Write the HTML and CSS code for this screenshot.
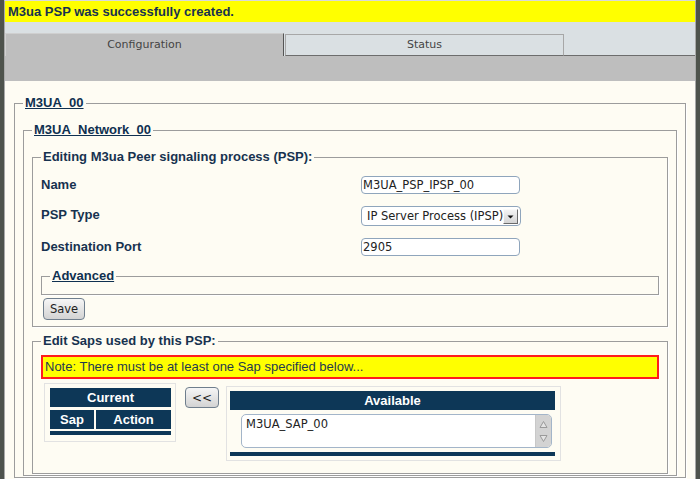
FILE: index.html
```html
<!DOCTYPE html>
<html>
<head>
<meta charset="utf-8">
<link rel="stylesheet" href="styles.css">
</head>
<body>
<div class="frame">
  <div class="banner">M3ua PSP was successfully created.</div>
  <div class="tabbar">
    <div class="tab active">Configuration</div>
    <div class="tab">Status</div>
    <div class="tabfill"></div>
  </div>
  <div class="band"></div>
  <div class="content">
    <fieldset class="fs">
      <legend class="lg"><a href="#">M3UA_00</a></legend>
      <fieldset class="fs">
        <legend class="lg"><a href="#">M3UA_Network_00</a></legend>
        <fieldset class="fs edit">
          <legend class="lg">Editing M3ua Peer signaling process (PSP):</legend>
          <div class="form">
            <label class="lbl">Name</label>
            <input class="inp" type="text" value="M3UA_PSP_IPSP_00">
            <label class="lbl up">PSP Type</label>
            <div class="sel">
              <select class="selbox"><option>IP Server Process (IPSP)</option></select>
              <span class="selbtn"><svg width="7" height="4" viewBox="0 0 7 4"><path d="M0.5 0.5h6l-3 3z" fill="#111"/></svg></span>
            </div>
            <label class="lbl">Destination Port</label>
            <input class="inp" type="text" value="2905">
          </div>
          <fieldset class="fs adv">
            <legend class="lg"><a href="#">Advanced</a></legend>
          </fieldset>
          <button class="btn save">Save</button>
        </fieldset>
        <fieldset class="fs saps">
          <legend class="lg">Edit Saps used by this PSP:</legend>
          <div class="note">Note: There must be at least one Sap specified below...</div>
          <div class="saprow">
            <div class="cur">
              <div class="hd span2">Current</div>
              <div class="hd">Sap</div>
              <div class="hd">Action</div>
              <div class="bar span2"></div>
            </div>
            <button class="btn move">&lt;&lt;</button>
            <div class="avail">
              <div class="hd">Available</div>
              <div class="list">
                <div class="opt">M3UA_SAP_00</div>
                <div class="sbar">
                  <svg width="15" height="33" viewBox="0 0 15 33">
                    <path d="M4 12.5h7l-3.5-6z" fill="#e4e4e4" stroke="#9a9a9a" stroke-width="1"/>
                    <path d="M4 20.5h7l-3.5 6z" fill="#e4e4e4" stroke="#9a9a9a" stroke-width="1"/>
                  </svg>
                </div>
              </div>
              <div class="bar"></div>
            </div>
          </div>
        </fieldset>
      </fieldset>
    </fieldset>
  </div>
</div>
</body>
</html>
```

FILE: styles.css
```css
html, body {
  margin: 0;
  padding: 0;
}
body {
  background: #4e534c;
  font-family: "Liberation Sans", Arial, sans-serif;
  color: #17324f;
}
.frame {
  margin: 0 4px;
  height: 478px;
  overflow: hidden;
  background: #fefcf3;
  border-top: 1px solid #d9d9d9;
  border-left: 1px solid #a9a9a9;
  border-right: 1px solid #a9a9a9;
}
.banner {
  height: 21px;
  line-height: 21px;
  background: #ffff00;
  font-weight: bold;
  font-size: 13px;
  padding-left: 3px;
  color: #173250;
}
.tabbar {
  height: 34px;
  background: #dae0e3;
  display: flex;
  align-items: flex-end;
}
.tab {
  box-sizing: border-box;
  font-family: "DejaVu Sans", sans-serif;
  font-size: 11px;
  color: #444;
  text-align: center;
}
.tab.active {
  width: 279px;
  height: 23px;
  line-height: 22px;
  background: #bebebe;
  border-top: 1px solid #cfcfcf;
  border-left: 1px solid #d2d2d2;
  border-right: 1px solid #555;
}
.tab:not(.active) {
  width: 279px;
  height: 22px;
  line-height: 20px;
  margin-left: 1px;
  background: #dae0e3;
  border: 1px solid #a7a7a7;
  border-bottom-color: #6d6d6d;
}
.tabfill {
  flex: 1;
  height: 0;
  border-bottom: 1px solid #6d6d6d;
}
.band {
  height: 25px;
  background: #bebebe;
}
.content {
  padding: 14px 9px 0;
}
.fs {
  margin: 0;
  min-width: 0;
  padding: 11px 8px 1px;
  border: 1px solid #9c9c9c;
  box-shadow: 1px 1px 0 #ffffff;
}
.lg {
  padding: 0 2px;
  font-weight: bold;
  font-size: 13px;
  line-height: 16px;
}
.lg a {
  color: #0f3050;
  text-decoration: underline;
}
.edit {
  padding-bottom: 6px;
}
.form {
  display: grid;
  grid-template-columns: 320px 160px;
  row-gap: 12px;
  align-items: center;
}
.lbl {
  font-weight: bold;
  font-size: 13px;
  line-height: 16px;
}
.lbl.up {
  margin-bottom: 3px;
}
.inp {
  box-sizing: border-box;
  width: 159px;
  height: 18px;
  margin: 0;
  padding: 0 1px;
  border: 1px solid #8fa5bc;
  border-radius: 4px;
  background: #fff;
  font-family: "DejaVu Sans", sans-serif;
  font-size: 11.5px;
  color: #222;
  outline: none;
}
.sel {
  position: relative;
  width: 160px;
  height: 20px;
}
.selbox {
  -webkit-appearance: none;
  appearance: none;
  box-sizing: border-box;
  width: 160px;
  height: 20px;
  margin: 0;
  padding: 0 0 0 5px;
  border: 1px solid #8fa5bc;
  border-radius: 4px;
  background: #fff;
  font-family: "DejaVu Sans", sans-serif;
  font-size: 11.5px;
  color: #222;
}
.selbtn {
  position: absolute;
  left: 142px;
  top: 3px;
  box-sizing: border-box;
  width: 15px;
  height: 15px;
  background: linear-gradient(#f4f4f4, #d4d4d4);
  border: 1px solid;
  border-color: #fafafa #6a6a6a #6a6a6a #fafafa;
  display: flex;
  align-items: center;
  justify-content: center;
}
.adv {
  margin-top: 12px;
  padding: 0 8px 10px;
}
.btn {
  box-sizing: border-box;
  margin: 0;
  padding: 0;
  border: 1px solid #6f7e8d;
  border-radius: 4px;
  background: linear-gradient(#f6f6f6, #d3d3d3);
  font-family: "DejaVu Sans", sans-serif;
  font-size: 11.5px;
  color: #1d1d1d;
}
.save {
  display: block;
  width: 42px;
  height: 22px;
  margin: 3px 0 0 2px;
}
.saps {
  margin-top: 6px;
  padding: 6px 8px 12px;
}
.note {
  box-sizing: border-box;
  height: 24px;
  line-height: 20px;
  padding-left: 2px;
  background: #ffff00;
  border: 2px solid #ff1c1c;
  font-size: 13px;
  color: #1f3a4f;
}
.saprow {
  display: flex;
  align-items: flex-start;
  margin-top: 4px;
  padding-left: 3px;
}
.cur {
  display: grid;
  grid-template-columns: 44px 75px;
  column-gap: 2px;
  grid-template-rows: 19px 19px 3px;
  row-gap: 3px;
  padding: 4px 4px 6px 5px;
  border: 1px solid #e2e2e2;
}
.cur .bar {
  margin-top: -1px;
}
.span2 {
  grid-column: span 2;
}
.hd {
  background: #0d3757;
  color: #fff;
  font-weight: bold;
  font-size: 13px;
  line-height: 19px;
  text-align: center;
}
.bar {
  background: #0d3757;
}
.move {
  width: 34px;
  height: 21px;
  margin: 4px 0 0 9px;
  font-size: 12px;
}
.avail {
  box-sizing: border-box;
  width: 335px;
  margin: 3px 0 0 7px;
  padding: 4px 5px 4px 3px;
  border: 1px solid #e2e2e2;
}
.list {
  display: flex;
  height: 34px;
  box-sizing: border-box;
  margin: 4px 3px 0 11px;
  border: 1px solid #a3b5c9;
  border-radius: 5px;
  background: #fff;
  overflow: hidden;
}
.opt {
  flex: 1;
  padding: 2px 0 0 4px;
  line-height: 14px;
  font-family: "DejaVu Sans", sans-serif;
  font-size: 11.5px;
  color: #222;
}
.sbar {
  width: 15px;
  background: #d3d3d3;
  border-left: 1px solid #c8c8c8;
}
.sbar svg {
  display: block;
}
.avail .bar {
  height: 4px;
  margin-top: 4px;
}
```
